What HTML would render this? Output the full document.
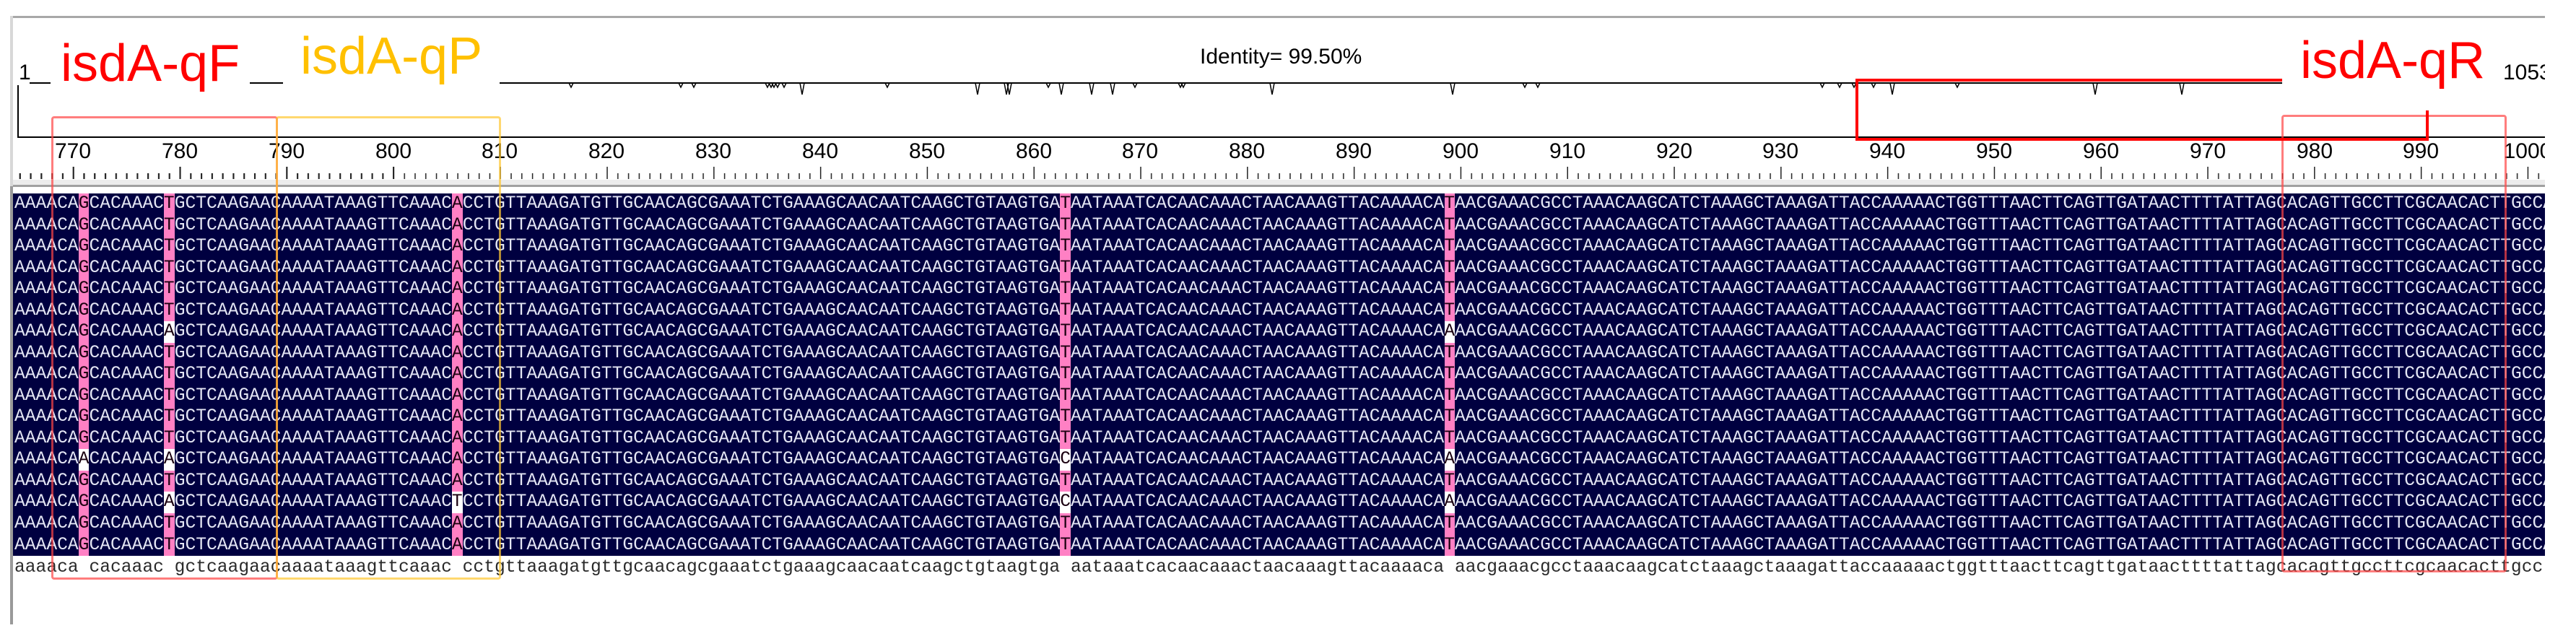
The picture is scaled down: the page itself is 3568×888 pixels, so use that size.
<!DOCTYPE html>
<html><head><meta charset="utf-8"><style>
body{margin:0;width:3568px;height:888px;background:#fff;position:relative;overflow:hidden;font-family:"Liberation Sans",sans-serif}
.a{position:absolute}
.seq{position:absolute;left:20px;top:268px;font-family:"Liberation Mono",monospace;font-size:24.63px;line-height:29.53px;white-space:pre;color:#e4e6f4;margin:0}
.seq b{font-weight:normal;color:#1a0010}
.col{position:absolute;top:268px;height:502px;width:14.78px;background:#ff80c4}
.wc{position:absolute;width:14.78px;height:29.53px;background:#fff}
.num{position:absolute;top:193px;font-size:30px;width:80px;margin-left:-40px;text-align:center;color:#000}
.lab{position:absolute;font-size:72px;background:#fff;line-height:1}
</style></head><body>
<!-- top panel -->
<div class="a" style="left:18px;top:22px;width:3507px;height:3px;background:#a8a8a8"></div>
<div class="a" style="left:14px;top:22px;width:4px;height:236px;background:#d8d8d8"></div>
<div class="a" style="left:24px;top:118px;width:2px;height:73px;background:#000"></div>
<div class="a" style="left:24px;top:189px;width:3501px;height:2px;background:#000"></div>
<div class="a" style="left:26px;top:84px;font-size:30px">1</div>
<svg class="a" style="left:0;top:0" width="3568" height="260">
<line x1="41" y1="115" x2="3161" y2="115" stroke="#000" stroke-width="2"/>
<g stroke="#000" stroke-width="1.5" fill="none">
<path d="M788 115L791 121L794 115M940 115L943 121L946 115M958 115L961 121L964 115M1060 115L1063 121L1066 115M1065 115L1068 121L1071 115M1069 115L1072 121L1075 115M1074 115L1077 121L1080 115M1083 115L1086 121L1089 115M1108 115L1111 131L1114 115M1226 115L1229 121L1232 115M1351 115L1354 131L1357 115M1391 115L1394 131L1397 115M1395 115L1398 131L1401 115M1449 115L1452 121L1455 115M1467 115L1470 131L1473 115M1509 115L1512 131L1515 115M1538 115L1541 131L1544 115M1569 115L1572 121L1575 115M1632 115L1635 121L1638 115M1636 115L1639 121L1642 115M1759 115L1762 131L1765 115M2009 115L2012 131L2015 115M2109 115L2112 121L2115 115M2127 115L2130 121L2133 115M2521 115L2524 121L2527 115M2545 115L2548 121L2551 115M2565 115L2568 121L2571 115M2592 115L2595 121L2598 115M2618 115L2621 131L2624 115M2708 115L2711 121L2714 115M2899 115L2902 131L2905 115M3019 115L3022 131L3025 115"/>
</g>
<g stroke="#000" stroke-width="1.5">
<path id="t" d=""/>
</g>
</svg>
<!-- ruler ticks -->
<svg class="a" style="left:0;top:228px" width="3525" height="22">
<g stroke="#222" stroke-width="1.5">
<path d="M27.4 12V20M42.2 12V20M57 12V20M71.8 12V20M86.6 12V20M101.4 3V20M116.1 12V20M130.9 12V20M145.7 12V20M160.5 12V20M175.3 12V20M190.1 12V20M204.8 12V20M219.6 12V20M234.4 12V20M249.2 3V20M264 12V20M278.8 12V20M293.5 12V20M308.3 12V20M323.1 12V20M337.9 12V20M352.7 12V20M367.5 12V20M382.2 12V20M397 3V20M411.8 12V20M426.6 12V20M441.4 12V20M456.2 12V20M470.9 12V20M485.7 12V20M500.5 12V20M515.3 12V20M530.1 12V20M544.8 3V20"/>
</g>
</svg>
<svg class="a" style="left:0;top:228px" width="3525" height="22">
<defs><pattern id="tk" x="27.39" y="0" width="147.8" height="22" patternUnits="userSpaceOnUse">
<g stroke="#222" stroke-width="1.5">
<line x1="0.75" y1="12" x2="0.75" y2="20"/><line x1="15.53" y1="12" x2="15.53" y2="20"/><line x1="30.31" y1="12" x2="30.31" y2="20"/><line x1="45.09" y1="12" x2="45.09" y2="20"/><line x1="59.87" y1="12" x2="59.87" y2="20"/><line x1="74.65" y1="3" x2="74.65" y2="20"/><line x1="89.43" y1="12" x2="89.43" y2="20"/><line x1="104.21" y1="12" x2="104.21" y2="20"/><line x1="118.99" y1="12" x2="118.99" y2="20"/><line x1="133.77" y1="12" x2="133.77" y2="20"/>
</g></pattern></defs>
<rect x="20" y="0" width="3505" height="22" fill="url(#tk)"/>
</svg>
<div class="a" style="left:18px;top:249px;width:3507px;height:7px;background:#ececec"></div>
<div class="a" style="left:18px;top:256px;width:3507px;height:3px;background:#a0a0a0"></div>
<!-- ruler numbers -->
<div class="num" style="left:101px">770</div><div class="num" style="left:249px">780</div><div class="num" style="left:397px">790</div><div class="num" style="left:545px">800</div><div class="num" style="left:692px">810</div><div class="num" style="left:840px">820</div><div class="num" style="left:988px">830</div><div class="num" style="left:1136px">840</div><div class="num" style="left:1284px">850</div><div class="num" style="left:1432px">860</div><div class="num" style="left:1579px">870</div><div class="num" style="left:1727px">880</div><div class="num" style="left:1875px">890</div><div class="num" style="left:2023px">900</div><div class="num" style="left:2171px">910</div><div class="num" style="left:2319px">920</div><div class="num" style="left:2466px">930</div><div class="num" style="left:2614px">940</div><div class="num" style="left:2762px">950</div><div class="num" style="left:2910px">960</div><div class="num" style="left:3058px">970</div><div class="num" style="left:3206px">980</div><div class="num" style="left:3353px">990</div><div class="num" style="left:3501px">1000</div>
<div class="a" style="left:3525px;top:0;width:43px;height:888px;background:#fff"></div>
<div class="a" style="left:1662px;top:62px;font-size:30px">Identity= 99.50%</div>
<div class="a" style="left:3467px;top:84px;font-size:30px;width:58px;overflow:hidden;white-space:nowrap">1053</div>
<!-- labels -->
<div class="lab" style="left:70px;top:52px;padding:0 14px;color:#ff0000;height:88px">isdA-qF</div>
<div class="lab" style="left:392px;top:42px;padding:0 24px;color:#ffc000;height:90px">isdA-qP</div>
<div class="lab" style="left:3176px;top:48px;padding:0 10px;color:#ff0000;background:transparent">isdA-qR</div>
<!-- sequence pane -->
<div class="a" style="left:14px;top:258px;width:4px;height:607px;background:#999"></div>
<div class="a" style="left:18px;top:268px;width:3507px;height:502px;background:#000040"></div>
<div class="col" style="left:108.7px"></div><div class="col" style="left:226.9px"></div><div class="col" style="left:626px"></div><div class="col" style="left:1468.4px"></div><div class="col" style="left:2000.5px"></div>
<div class="wc" style="left:226.9px;top:445.2px"></div><div class="wc" style="left:2000.5px;top:445.2px"></div>
<div class="wc" style="left:108.7px;top:622.4px"></div><div class="wc" style="left:226.9px;top:622.4px"></div><div class="wc" style="left:1468.4px;top:622.4px"></div><div class="wc" style="left:2000.5px;top:622.4px"></div>
<div class="wc" style="left:226.9px;top:681.4px"></div><div class="wc" style="left:626px;top:681.4px"></div><div class="wc" style="left:1468.4px;top:681.4px"></div><div class="wc" style="left:2000.5px;top:681.4px"></div>
<div class="a" style="left:0;top:0;width:3525px;height:888px;overflow:hidden">
<pre class="seq">AAAACA<b>G</b>CACAAAC<b>T</b>GCTCAAGAACAAAATAAAGTTCAAAC<b>A</b>CCTGTTAAAGATGTTGCAACAGCGAAATCTGAAAGCAACAATCAAGCTGTAAGTGA<b>T</b>AATAAATCACAACAAACTAACAAAGTTACAAAACA<b>T</b>AACGAAACGCCTAAACAAGCATCTAAAGCTAAAGATTACCAAAAACTGGTTTAACTTCAGTTGATAACTTTTATTAGCACAGTTGCCTTCGCAACACTTGCCA
AAAACA<b>G</b>CACAAAC<b>T</b>GCTCAAGAACAAAATAAAGTTCAAAC<b>A</b>CCTGTTAAAGATGTTGCAACAGCGAAATCTGAAAGCAACAATCAAGCTGTAAGTGA<b>T</b>AATAAATCACAACAAACTAACAAAGTTACAAAACA<b>T</b>AACGAAACGCCTAAACAAGCATCTAAAGCTAAAGATTACCAAAAACTGGTTTAACTTCAGTTGATAACTTTTATTAGCACAGTTGCCTTCGCAACACTTGCCA
AAAACA<b>G</b>CACAAAC<b>T</b>GCTCAAGAACAAAATAAAGTTCAAAC<b>A</b>CCTGTTAAAGATGTTGCAACAGCGAAATCTGAAAGCAACAATCAAGCTGTAAGTGA<b>T</b>AATAAATCACAACAAACTAACAAAGTTACAAAACA<b>T</b>AACGAAACGCCTAAACAAGCATCTAAAGCTAAAGATTACCAAAAACTGGTTTAACTTCAGTTGATAACTTTTATTAGCACAGTTGCCTTCGCAACACTTGCCA
AAAACA<b>G</b>CACAAAC<b>T</b>GCTCAAGAACAAAATAAAGTTCAAAC<b>A</b>CCTGTTAAAGATGTTGCAACAGCGAAATCTGAAAGCAACAATCAAGCTGTAAGTGA<b>T</b>AATAAATCACAACAAACTAACAAAGTTACAAAACA<b>T</b>AACGAAACGCCTAAACAAGCATCTAAAGCTAAAGATTACCAAAAACTGGTTTAACTTCAGTTGATAACTTTTATTAGCACAGTTGCCTTCGCAACACTTGCCA
AAAACA<b>G</b>CACAAAC<b>T</b>GCTCAAGAACAAAATAAAGTTCAAAC<b>A</b>CCTGTTAAAGATGTTGCAACAGCGAAATCTGAAAGCAACAATCAAGCTGTAAGTGA<b>T</b>AATAAATCACAACAAACTAACAAAGTTACAAAACA<b>T</b>AACGAAACGCCTAAACAAGCATCTAAAGCTAAAGATTACCAAAAACTGGTTTAACTTCAGTTGATAACTTTTATTAGCACAGTTGCCTTCGCAACACTTGCCA
AAAACA<b>G</b>CACAAAC<b>T</b>GCTCAAGAACAAAATAAAGTTCAAAC<b>A</b>CCTGTTAAAGATGTTGCAACAGCGAAATCTGAAAGCAACAATCAAGCTGTAAGTGA<b>T</b>AATAAATCACAACAAACTAACAAAGTTACAAAACA<b>T</b>AACGAAACGCCTAAACAAGCATCTAAAGCTAAAGATTACCAAAAACTGGTTTAACTTCAGTTGATAACTTTTATTAGCACAGTTGCCTTCGCAACACTTGCCA
AAAACA<b>G</b>CACAAAC<b>A</b>GCTCAAGAACAAAATAAAGTTCAAAC<b>A</b>CCTGTTAAAGATGTTGCAACAGCGAAATCTGAAAGCAACAATCAAGCTGTAAGTGA<b>T</b>AATAAATCACAACAAACTAACAAAGTTACAAAACA<b>A</b>AACGAAACGCCTAAACAAGCATCTAAAGCTAAAGATTACCAAAAACTGGTTTAACTTCAGTTGATAACTTTTATTAGCACAGTTGCCTTCGCAACACTTGCCA
AAAACA<b>G</b>CACAAAC<b>T</b>GCTCAAGAACAAAATAAAGTTCAAAC<b>A</b>CCTGTTAAAGATGTTGCAACAGCGAAATCTGAAAGCAACAATCAAGCTGTAAGTGA<b>T</b>AATAAATCACAACAAACTAACAAAGTTACAAAACA<b>T</b>AACGAAACGCCTAAACAAGCATCTAAAGCTAAAGATTACCAAAAACTGGTTTAACTTCAGTTGATAACTTTTATTAGCACAGTTGCCTTCGCAACACTTGCCA
AAAACA<b>G</b>CACAAAC<b>T</b>GCTCAAGAACAAAATAAAGTTCAAAC<b>A</b>CCTGTTAAAGATGTTGCAACAGCGAAATCTGAAAGCAACAATCAAGCTGTAAGTGA<b>T</b>AATAAATCACAACAAACTAACAAAGTTACAAAACA<b>T</b>AACGAAACGCCTAAACAAGCATCTAAAGCTAAAGATTACCAAAAACTGGTTTAACTTCAGTTGATAACTTTTATTAGCACAGTTGCCTTCGCAACACTTGCCA
AAAACA<b>G</b>CACAAAC<b>T</b>GCTCAAGAACAAAATAAAGTTCAAAC<b>A</b>CCTGTTAAAGATGTTGCAACAGCGAAATCTGAAAGCAACAATCAAGCTGTAAGTGA<b>T</b>AATAAATCACAACAAACTAACAAAGTTACAAAACA<b>T</b>AACGAAACGCCTAAACAAGCATCTAAAGCTAAAGATTACCAAAAACTGGTTTAACTTCAGTTGATAACTTTTATTAGCACAGTTGCCTTCGCAACACTTGCCA
AAAACA<b>G</b>CACAAAC<b>T</b>GCTCAAGAACAAAATAAAGTTCAAAC<b>A</b>CCTGTTAAAGATGTTGCAACAGCGAAATCTGAAAGCAACAATCAAGCTGTAAGTGA<b>T</b>AATAAATCACAACAAACTAACAAAGTTACAAAACA<b>T</b>AACGAAACGCCTAAACAAGCATCTAAAGCTAAAGATTACCAAAAACTGGTTTAACTTCAGTTGATAACTTTTATTAGCACAGTTGCCTTCGCAACACTTGCCA
AAAACA<b>G</b>CACAAAC<b>T</b>GCTCAAGAACAAAATAAAGTTCAAAC<b>A</b>CCTGTTAAAGATGTTGCAACAGCGAAATCTGAAAGCAACAATCAAGCTGTAAGTGA<b>T</b>AATAAATCACAACAAACTAACAAAGTTACAAAACA<b>T</b>AACGAAACGCCTAAACAAGCATCTAAAGCTAAAGATTACCAAAAACTGGTTTAACTTCAGTTGATAACTTTTATTAGCACAGTTGCCTTCGCAACACTTGCCA
AAAACA<b>A</b>CACAAAC<b>A</b>GCTCAAGAACAAAATAAAGTTCAAAC<b>A</b>CCTGTTAAAGATGTTGCAACAGCGAAATCTGAAAGCAACAATCAAGCTGTAAGTGA<b>C</b>AATAAATCACAACAAACTAACAAAGTTACAAAACA<b>A</b>AACGAAACGCCTAAACAAGCATCTAAAGCTAAAGATTACCAAAAACTGGTTTAACTTCAGTTGATAACTTTTATTAGCACAGTTGCCTTCGCAACACTTGCCA
AAAACA<b>G</b>CACAAAC<b>T</b>GCTCAAGAACAAAATAAAGTTCAAAC<b>A</b>CCTGTTAAAGATGTTGCAACAGCGAAATCTGAAAGCAACAATCAAGCTGTAAGTGA<b>T</b>AATAAATCACAACAAACTAACAAAGTTACAAAACA<b>T</b>AACGAAACGCCTAAACAAGCATCTAAAGCTAAAGATTACCAAAAACTGGTTTAACTTCAGTTGATAACTTTTATTAGCACAGTTGCCTTCGCAACACTTGCCA
AAAACA<b>G</b>CACAAAC<b>A</b>GCTCAAGAACAAAATAAAGTTCAAAC<b>T</b>CCTGTTAAAGATGTTGCAACAGCGAAATCTGAAAGCAACAATCAAGCTGTAAGTGA<b>C</b>AATAAATCACAACAAACTAACAAAGTTACAAAACA<b>A</b>AACGAAACGCCTAAACAAGCATCTAAAGCTAAAGATTACCAAAAACTGGTTTAACTTCAGTTGATAACTTTTATTAGCACAGTTGCCTTCGCAACACTTGCCA
AAAACA<b>G</b>CACAAAC<b>T</b>GCTCAAGAACAAAATAAAGTTCAAAC<b>A</b>CCTGTTAAAGATGTTGCAACAGCGAAATCTGAAAGCAACAATCAAGCTGTAAGTGA<b>T</b>AATAAATCACAACAAACTAACAAAGTTACAAAACA<b>T</b>AACGAAACGCCTAAACAAGCATCTAAAGCTAAAGATTACCAAAAACTGGTTTAACTTCAGTTGATAACTTTTATTAGCACAGTTGCCTTCGCAACACTTGCCA
AAAACA<b>G</b>CACAAAC<b>T</b>GCTCAAGAACAAAATAAAGTTCAAAC<b>A</b>CCTGTTAAAGATGTTGCAACAGCGAAATCTGAAAGCAACAATCAAGCTGTAAGTGA<b>T</b>AATAAATCACAACAAACTAACAAAGTTACAAAACA<b>T</b>AACGAAACGCCTAAACAAGCATCTAAAGCTAAAGATTACCAAAAACTGGTTTAACTTCAGTTGATAACTTTTATTAGCACAGTTGCCTTCGCAACACTTGCCA</pre>
<pre class="seq" style="top:772px;color:#2a2a2a">aaaaca cacaaac gctcaagaacaaaataaagttcaaac cctgttaaagatgttgcaacagcgaaatctgaaagcaacaatcaagctgtaagtga aataaatcacaacaaactaacaaagttacaaaaca aacgaaacgcctaaacaagcatctaaagctaaagattaccaaaaactggtttaacttcagttgataacttttattagcacagttgccttcgcaacacttgcc</pre>
</div>
<!-- highlight frames -->
<div class="a" style="left:71px;top:161px;width:308px;height:636px;border:3px solid rgba(255,70,70,0.7);border-radius:4px"></div>
<div class="a" style="left:382px;top:161px;width:306px;height:636px;border:3px solid rgba(255,200,50,0.7);border-radius:4px"></div>
<div class="a" style="left:3160px;top:159px;width:306px;height:628px;border:3px solid rgba(255,70,70,0.7);border-radius:4px"></div>
<!-- bright red qR bracket -->
<div class="a" style="left:2570px;top:109px;width:591px;height:4px;background:#ff0000"></div>
<div class="a" style="left:2570px;top:109px;width:4px;height:86px;background:#ff0000"></div>
<div class="a" style="left:2570px;top:191px;width:794px;height:4px;background:#ff0000"></div>
<div class="a" style="left:3360px;top:153px;width:4px;height:42px;background:#ff0000"></div>
</body></html>
